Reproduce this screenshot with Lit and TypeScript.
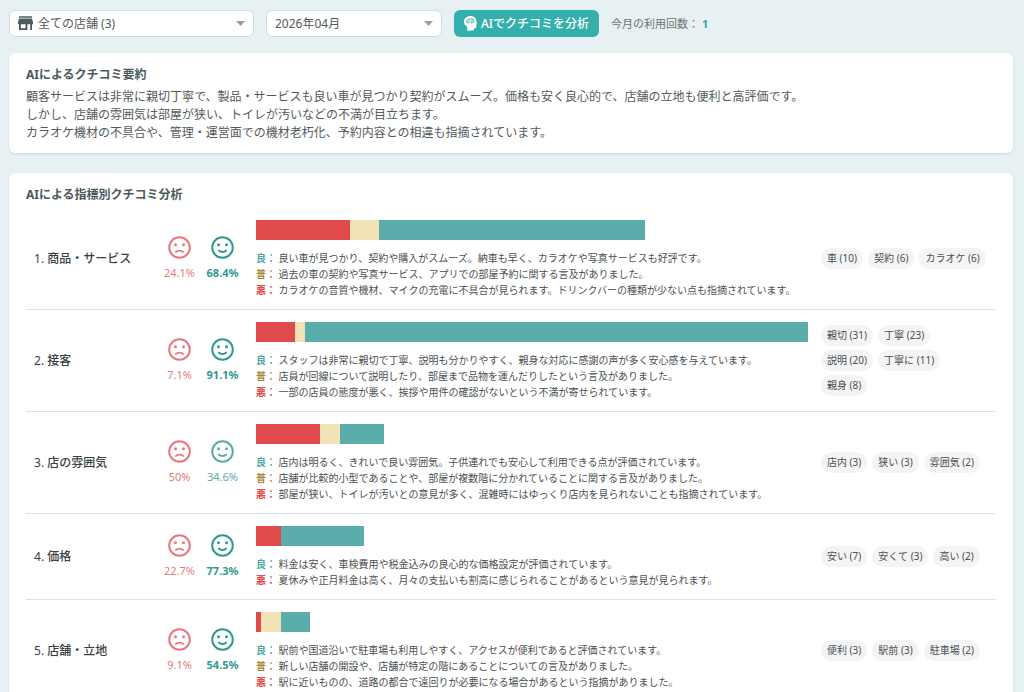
import { LitElement, html, svg, css, nothing } from "lit";
import { customElement, property } from "lit/decorators.js";
import { classMap } from "lit/directives/class-map.js";

interface Metric {
  name: string;
  bad: number;
  fair: number;
  good: number;
  goodText: string;
  fairText?: string;
  badText: string;
  tags: [string, number][];
}

const METRICS: Metric[] = [
  {
    name: "商品・サービス",
    bad: 19,
    fair: 6,
    good: 54,
    goodText: "良い車が見つかり、契約や購入がスムーズ。納車も早く、カラオケや写真サービスも好評です。",
    fairText: "過去の車の契約や写真サービス、アプリでの部屋予約に関する言及がありました。",
    badText: "カラオケの音質や機材、マイクの充電に不具合が見られます。ドリンクバーの種類が少ない点も指摘されています。",
    tags: [["車", 10], ["契約", 6], ["カラオケ", 6]],
  },
  {
    name: "接客",
    bad: 8,
    fair: 2,
    good: 102,
    goodText: "スタッフは非常に親切で丁寧、説明も分かりやすく、親身な対応に感謝の声が多く安心感を与えています。",
    fairText: "店員が回線について説明したり、部屋まで品物を運んだりしたという言及がありました。",
    badText: "一部の店員の態度が悪く、挨拶や用件の確認がないという不満が寄せられています。",
    tags: [["親切", 31], ["丁寧", 23], ["説明", 20], ["丁寧に", 11], ["親身", 8]],
  },
  {
    name: "店の雰囲気",
    bad: 13,
    fair: 4,
    good: 9,
    goodText: "店内は明るく、きれいで良い雰囲気。子供連れでも安心して利用できる点が評価されています。",
    fairText: "店舗が比較的小型であることや、部屋が複数階に分かれていることに関する言及がありました。",
    badText: "部屋が狭い、トイレが汚いとの意見が多く、混雑時にはゆっくり店内を見られないことも指摘されています。",
    tags: [["店内", 3], ["狭い", 3], ["雰囲気", 2]],
  },
  {
    name: "価格",
    bad: 5,
    fair: 0,
    good: 17,
    goodText: "料金は安く、車検費用や税金込みの良心的な価格設定が評価されています。",
    badText: "夏休みや正月料金は高く、月々の支払いも割高に感じられることがあるという意見が見られます。",
    tags: [["安い", 7], ["安くて", 3], ["高い", 2]],
  },
  {
    name: "店舗・立地",
    bad: 1,
    fair: 4,
    good: 6,
    goodText: "駅前や国道沿いで駐車場も利用しやすく、アクセスが便利であると評価されています。",
    fairText: "新しい店舗の開設や、店舗が特定の階にあることについての言及がありました。",
    badText: "駅に近いものの、道路の都合で遠回りが必要になる場合があるという指摘がありました。",
    tags: [["便利", 3], ["駅前", 3], ["駐車場", 2]],
  },
];

const percent = (part: number, total: number) =>
  `${Math.round((part / total) * 1000) / 10}%`;

const frown = svg`<path d="M8 15.900C9.400 14.200 13.600 14.200 15 15.900" fill="none" stroke="currentColor" stroke-width="1.900" stroke-linecap="round"/>`;
const smile = svg`<path d="M8 14.600C9.400 16.400 13.600 16.400 15 14.600" fill="none" stroke="currentColor" stroke-width="2" stroke-linecap="round"/>`;

@customElement("metric-row")
export class MetricRow extends LitElement {
  @property({ attribute: false }) metric!: Metric;
  @property({ type: Number }) index = 1;
  @property({ type: Number }) max = 1;

  static styles = css`
    :host {
      display: grid;
      grid-template-columns: 124px 43px 43px minmax(0, 1fr) 165px;
      align-items: center;
      padding: 12px 10px 11px 8px;
      border-bottom: 1px solid #e0e2e3;
      color: #4a5052;
    }
    .name {
      margin: 0;
      font-size: 12px;
      line-height: 18px;
      font-weight: 500;
      color: #3a3f42;
    }
    .num {
      font-weight: 400;
    }
    .score {
      display: flex;
      flex-direction: column;
      align-items: center;
      gap: 6px;
      padding-bottom: 2px;
      font-size: 11px;
      line-height: 16px;
    }
    .score svg {
      width: 23px;
      height: 23px;
      display: block;
    }
    .score.bad {
      color: #e97780;
    }
    .score.good {
      color: #5aada6;
    }
    .score.major {
      color: #2f9a91;
      font-weight: 700;
    }
    .detail {
      margin: 0 13px 0 12px;
    }
    .bar {
      display: flex;
      height: 20px;
      margin-bottom: 10px;
    }
    .seg.bad {
      background: #e04a4d;
    }
    .seg.fair {
      background: #f1e3b5;
    }
    .seg.good {
      background: #5aadaa;
    }
    .line {
      margin: 0;
      font-size: 10px;
      line-height: 16px;
    }
    .key {
      font-weight: 700;
    }
    .key.good {
      color: #4fa8a5;
    }
    .key.fair {
      color: #a88c3c;
    }
    .key.bad {
      color: #e04a4d;
    }
    .tags {
      display: flex;
      flex-wrap: wrap;
      gap: 4px 5px;
      margin: 0;
      padding: 0 0 2px;
      list-style: none;
      font-size: 10px;
      line-height: 21px;
    }
    .tag {
      padding: 0 6px;
      border-radius: 11px;
      background: #f4f4f5;
    }
  `;

  private line(kind: string, key: string, text?: string) {
    return text
      ? html`<p class="line"><span class="key ${kind}">${key}：</span> ${text}</p>`
      : nothing;
  }

  private score(kind: string, value: number, total: number) {
    const classes = { score: true, [kind]: true, major: kind === "good" && value / total > 0.5 };
    return html`<div class=${classMap(classes)}>
      <svg viewBox="0 0 23 23" aria-hidden="true">
        <circle cx="11.5" cy="11.5" r="10.3" fill="none" stroke="currentColor" stroke-width="2" />
        <circle cx="7.5" cy="8.8" r="1.5" fill="currentColor" />
        <circle cx="15.5" cy="8.8" r="1.5" fill="currentColor" />
        ${kind === "good" ? smile : frown}
      </svg>
      <span>${percent(value, total)}</span>
    </div>`;
  }

  private segment(kind: string, value: number, total: number) {
    return value
      ? html`<div class="seg ${kind}" style="width:${(value / total) * 100}%"></div>`
      : nothing;
  }

  render() {
    const m = this.metric;
    const total = m.bad + m.fair + m.good;
    return html`
      <h3 class="name"><span class="num">${this.index}.</span> ${m.name}</h3>
      ${this.score("bad", m.bad, total)} ${this.score("good", m.good, total)}
      <div class="detail">
        <div class="bar" style="width:${(total / this.max) * 100}%">
          ${this.segment("bad", m.bad, total)}${this.segment("fair", m.fair, total)}${this.segment("good", m.good, total)}
        </div>
        ${this.line("good", "良", m.goodText)}
        ${this.line("fair", "普", m.fairText)}
        ${this.line("bad", "悪", m.badText)}
      </div>
      <ul class="tags">
        ${m.tags.map(([word, count]) => html`<li class="tag">${word} (${count})</li>`)}
      </ul>
    `;
  }
}

@customElement("app-root")
export class AppRoot extends LitElement {
  static styles = css`
    :host {
      display: block;
      box-sizing: border-box;
      min-height: 100vh;
      padding: 10px 11px 20px 9px;
      background: #e7f0f2;
      color: #525a5c;
      font-family: "Noto Sans", "Noto Sans CJK JP", sans-serif;
      font-size: 12px;
      line-height: 18px;
    }
    .toolbar {
      display: flex;
      align-items: center;
      gap: 12px;
      margin-bottom: 16px;
    }
    .field {
      display: flex;
      align-items: center;
      gap: 5px;
      box-sizing: border-box;
      height: 27px;
      padding: 0 8px;
      border: 1px solid #d0dde0;
      border-radius: 6px;
      background: #fff;
    }
    .field.store {
      width: 245px;
    }
    .field.month {
      width: 176px;
    }
    .field select {
      flex: 1;
      min-width: 0;
      padding: 0;
      border: 0;
      appearance: none;
      background: transparent;
      color: inherit;
      font: inherit;
    }
    .store-icon {
      width: 15px;
      height: 14px;
      padding-bottom: 2px;
      color: #4c5c5c;
    }
    .caret {
      width: 9px;
      height: 5px;
      color: #9a9fa2;
    }
    .analyze {
      display: flex;
      align-items: center;
      gap: 4px;
      height: 27px;
      padding: 0 10px;
      border: 0;
      border-radius: 6px;
      background: #34b0ac;
      color: #fff;
      font: inherit;
      font-weight: 500;
    }
    .head-icon {
      width: 13px;
      height: 15px;
      padding-bottom: 1px;
    }
    .usage {
      margin: 0;
      font-size: 11px;
      color: #6a7375;
    }
    .usage b {
      color: #34a5a5;
    }
    .card {
      padding: 13px 17px 11px;
      border-radius: 6px;
      background: #fff;
      box-shadow: 0 1px 2px rgba(60, 90, 95, 0.16);
    }
    .card + .card {
      margin-top: 20px;
    }
    .title {
      margin: 0 0 4px;
      font-size: 12px;
      font-weight: 700;
      color: #4a5a5b;
    }
    .summary {
      margin: 0;
    }
    .metrics {
      margin: 0;
      padding: 0;
      list-style: none;
    }
  `;

  render() {
    const caret = html`<svg class="caret" viewBox="0 0 9 5" aria-hidden="true">
      <path d="M0 0h9L4.5 5z" fill="currentColor" />
    </svg>`;
    const max = Math.max(...METRICS.map((m) => m.bad + m.fair + m.good));
    return html`
      <div class="toolbar">
        <div class="field store">
          <svg class="store-icon" viewBox="0 0 15 14" fill="currentColor" aria-hidden="true">
            <path d="M1 0h13v2H1z" opacity=".75" />
            <path d="M1 2.6h13l1 4v1.6h-1V14h-1.8V8.200H9.400V14H1V8.200H0V6.600zM2.900 8.200v4h4.600v-4z" fill-rule="evenodd" />
          </svg>
          <select aria-label="店舗">
            <option>全ての店舗 (3)</option>
          </select>
          ${caret}
        </div>
        <div class="field month">
          <select aria-label="対象月">
            <option>2026年04月</option>
          </select>
          ${caret}
        </div>
        <button class="analyze" type="button">
          <svg class="head-icon" viewBox="0 0 13 15" aria-hidden="true">
            <path d="M6.500 0C10 0 12.200 2.300 12.500 5.500L13 6.800 12.400 8.500V11C12.400 12 11.700 12.300 10.700 12.300H10V14.200L3.300 15V10.800C1.300 9.600 0 8 0 5.700 0 2.300 3 0 6.500 0z" fill="#fff" />
            <path d="M2.200 6.800C1.200 5.400 2.300 3.900 3.500 3.800 3.700 2.300 5.600 1.500 6.700 2.400 8.200 1.500 10 2.600 9.900 4.100 11.100 5 10.500 6.900 9.100 7 8 8.200 6.500 7.700 6.200 6.800 5 7.800 3.100 7.900 2.200 6.800z" fill="#8fd0cd" />
            <path d="M6.300 2.600v4M4 5h2.200M6.400 4.600L8.600 5.200" fill="none" stroke="#fff" stroke-width=".6" />
          </svg>
          AIでクチコミを分析
        </button>
        <p class="usage">今月の利用回数： <b>1</b></p>
      </div>

      <section class="card">
        <h2 class="title">AIによるクチコミ要約</h2>
        <p class="summary">
          顧客サービスは非常に親切丁寧で、製品・サービスも良い車が見つかり契約がスムーズ。価格も安く良心的で、店舗の立地も便利と高評価です。<br />
          しかし、店舗の雰囲気は部屋が狭い、トイレが汚いなどの不満が目立ちます。<br />
          カラオケ機材の不具合や、管理・運営面での機材老朽化、予約内容との相違も指摘されています。
        </p>
      </section>

      <section class="card">
        <h2 class="title">AIによる指標別クチコミ分析</h2>
        <ol class="metrics">
          ${METRICS.map(
            (m, i) => html`<li><metric-row .metric=${m} .index=${i + 1} .max=${max}></metric-row></li>`
          )}
        </ol>
      </section>
    `;
  }
}
